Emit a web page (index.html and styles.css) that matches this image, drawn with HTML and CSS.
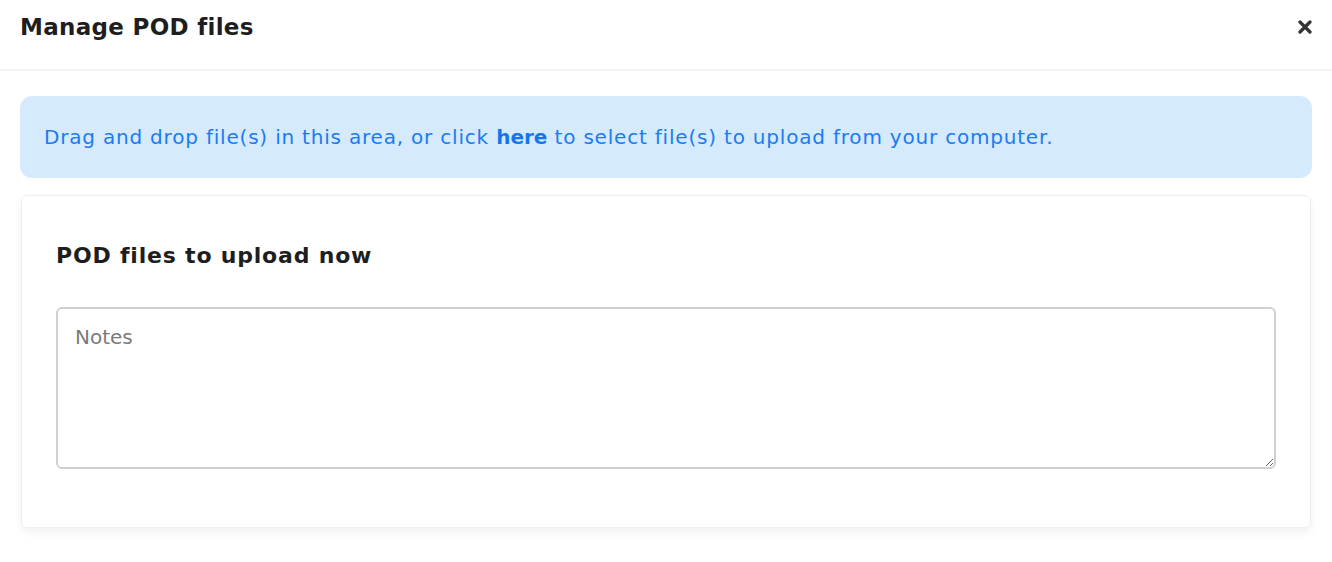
FILE: index.html
```html
<!DOCTYPE html>
<html lang="en">
<head>
  <meta charset="UTF-8">
  <title>Manage POD files</title>
  <link rel="stylesheet" href="styles.css">
</head>
<body>
  <div class="modal">
    <div class="modal-header">
      <h2 class="modal-title">Manage POD files</h2>
      <button class="close-btn" aria-label="Close">
        <svg width="14" height="14" viewBox="0 0 14 14">
          <path d="M2 2 L12 12 M12 2 L2 12" stroke="#333" stroke-width="3.2" stroke-linecap="round"/>
        </svg>
      </button>
    </div>

    <div class="modal-body">
      <div class="dropzone">
        Drag and drop file(s) in this area, or click <a href="#" class="link">here</a> to select file(s) to upload from your computer.
      </div>

      <div class="card">
        <h3 class="card-title">POD files to upload now</h3>
        <textarea class="notes" placeholder="Notes"></textarea>
      </div>
    </div>
  </div>
</body>
</html>
```

FILE: styles.css
```css
body {
  margin: 0;
  font-family: "DejaVu Sans", Arial, sans-serif;
  background-color: #ffffff;
  color: #1e1e1e;
}
.modal {
  width: 1332px;
}
.modal-header {
  height: 54px;
  padding: 0 20px 15px;
  display: flex;
  align-items: center;
  justify-content: space-between;
  border-bottom: 2px solid #f3f3f3;
}
.modal-title {
  margin: 0;
  font-size: 23px;
  letter-spacing: 0.3px;
  font-weight: 700;
}
.close-btn {
  border: none;
  background: none;
  padding: 0;
  display: flex;
  cursor: pointer;
}
.modal-body {
  padding: 25px 20px 24px;
}
.dropzone {
  background-color: #d6eafd;
  color: #1a7cf0;
  border-radius: 12px;
  padding: 27px 24px 27px;
  line-height: 28px;
  font-size: 20px;
  letter-spacing: 0.8px;
}
.link {
  color: #1576ec;
  font-weight: 700;
  letter-spacing: 0;
  text-decoration: none;
}
.card {
  margin: 17px 1px 0;
  border: 1px solid #eeeeee;
  border-radius: 6px;
  box-shadow: 0 4px 8px rgba(0, 0, 0, 0.06);
  padding: 46px 34px 58px;
}
.card-title {
  margin: 0 0 37px;
  font-size: 22px;
  letter-spacing: 0.8px;
  line-height: 28px;
  font-weight: 700;
}
.notes {
  display: block;
  box-sizing: border-box;
  width: 100%;
  height: 162px;
  border: 2px solid #d0d0d0;
  border-radius: 6px;
  padding: 16px 17px;
  font-family: inherit;
  font-size: 20px;
  color: #333;
}
.notes::placeholder {
  color: #7a7a7a;
}
```
